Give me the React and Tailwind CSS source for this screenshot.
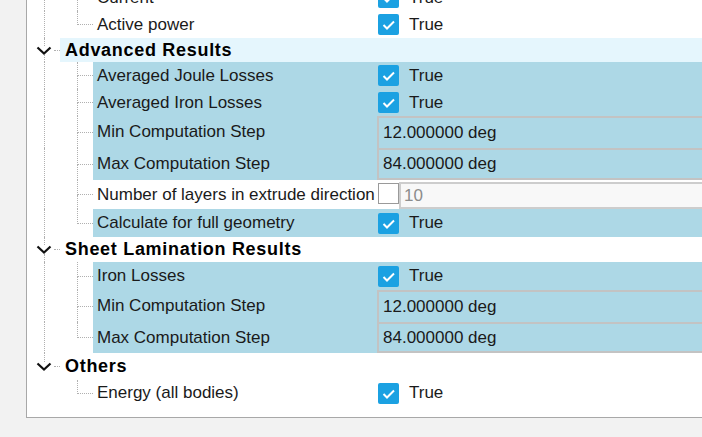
import clsx from 'clsx';

const DOT = 'border-dotted border-[#b0b0b0]';

const Checkbox = () => (
    <div className="w-[21px] h-[21px] shrink-0 rounded-[2px] bg-[#1ba1e2] flex items-center justify-center">
        <svg width="21" height="21" viewBox="0 0 21 21">
            <polyline points="5.5,11 9,14.5 16,7.5" fill="none" stroke="white" strokeWidth="2" />
        </svg>
    </div>
);

const CheckValue = () => (
    <div className="flex items-center pl-[1px] gap-[10px]">
        <Checkbox />
        <span>True</span>
    </div>
);

const TextValue = ({ text, bottom }) => (
    <div className={clsx('flex-1 flex items-center pl-[4px] border-l-2 border-t-2 border-[#c3c3c3]', bottom && 'border-b-2')}>
        {text}
    </div>
);

const RootCell = ({ line }) => (
    <div className="w-[33px] shrink-0 flex">
        <div className={clsx('ml-[17px] flex-1', line && `border-l ${DOT}`)} />
    </div>
);

const Child = ({ label, h, last, root = true, sel, children }) => (
    <div className={clsx('flex', h)}>
        <RootCell line={root} />
        <div className="w-[33px] shrink-0 flex flex-col">
            <div className={`flex-1 ml-[17px] border-l border-b ${DOT}`} />
            <div className={clsx('flex-1 ml-[17px]', !last && `border-l ${DOT}`)} />
        </div>
        <div className={clsx('flex-1 flex', sel && 'bg-[#add8e6]')}>
            <div className="w-[284px] shrink-0 pl-[4px] flex items-center whitespace-nowrap overflow-hidden">{label}</div>
            <div className="flex-1 flex">{children}</div>
        </div>
    </div>
);

const Header = ({ label, h, highlight, last }) => (
    <div className={clsx('flex', h)}>
        <div className="w-[33px] shrink-0 flex flex-col">
            <div className={`flex-1 ml-[17px] border-l ${DOT}`} />
            <div className="h-[9px] flex items-center">
                <svg className="ml-[9px] shrink-0" width="16" height="9" viewBox="0 0 16 9">
                    <polyline points="1.5,1.5 8,7.5 14.5,1.5" fill="none" stroke="#111" strokeWidth="2.2" />
                </svg>
                <div className={`ml-[2px] flex-1 border-t ${DOT}`} />
            </div>
            <div className={clsx('flex-1', !last && `ml-[17px] border-l ${DOT}`)} />
        </div>
        <div className={clsx('flex-1 flex items-center pl-[5px] font-bold text-[18px] tracking-[0.7px] text-black', highlight && 'bg-[#e5f6fd]')}>
            {label}
        </div>
    </div>
);

export default function App() {
    return (
        <div className="w-[702px] h-[437px] overflow-hidden bg-[#f2f2f2] flex font-['Liberation_Sans',Arial,sans-serif] text-[17px] text-[#1a1a1a]">
            <div className="ml-[2px] w-[1px] bg-[#e2e2e2]" />
            <div className="ml-[24px] h-[418px] w-[700px] shrink-0 bg-white border-l border-b border-[#a8a8a8] overflow-hidden">
                <div className="-mt-[16px]">
                    <Child label="Current" h="h-[27px]"><CheckValue /></Child>
                    <Child label="Active power" h="h-[27px]" last><CheckValue /></Child>

                    <Header label="Advanced Results" h="h-[24px]" highlight />
                    <Child label="Averaged Joule Losses" h="h-[27px]" sel><CheckValue /></Child>
                    <Child label="Averaged Iron Losses" h="h-[27px]" sel><CheckValue /></Child>
                    <Child label="Min Computation Step" h="h-[32px]" sel><TextValue text="12.000000 deg" /></Child>
                    <Child label="Max Computation Step" h="h-[32px]" sel><TextValue text="84.000000 deg" bottom /></Child>
                    <Child label="Number of layers in extrude direction" h="h-[29px]">
                        <div className="flex-1 flex pt-[2px] pl-[1px]">
                            <div className="w-[21px] h-[21px] mt-[1px] shrink-0 border border-[#9a9a9a] bg-white" />
                            <div className="flex-1 flex items-center pl-[3px] border-2 border-r-0 border-[#cdcdcd] bg-[#f8f8f8] text-[#8c8c8c]">10</div>
                        </div>
                    </Child>
                    <Child label="Calculate for full geometry" h="h-[28px]" sel last><CheckValue /></Child>

                    <Header label="Sheet Lamination Results" h="h-[25px]" />
                    <Child label="Iron Losses" h="h-[28px]" sel><CheckValue /></Child>
                    <Child label="Min Computation Step" h="h-[32px]" sel><TextValue text="12.000000 deg" /></Child>
                    <Child label="Max Computation Step" h="h-[31px]" sel last><TextValue text="84.000000 deg" bottom /></Child>

                    <Header label="Others" h="h-[27px]" last />
                    <Child label="Energy (all bodies)" h="h-[26px]" root={false} last><CheckValue /></Child>
                </div>
            </div>
        </div>
    );
}
